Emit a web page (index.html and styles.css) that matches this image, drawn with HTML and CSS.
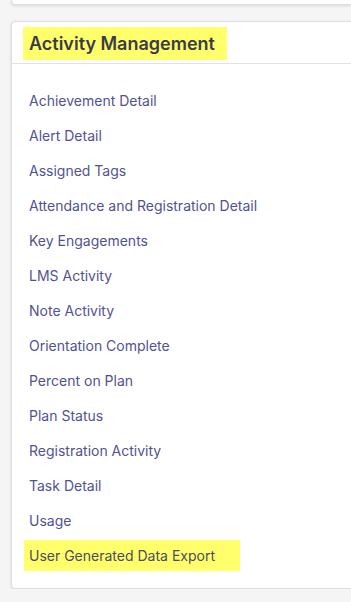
FILE: index.html
```html
<!DOCTYPE html>
<html lang="en">
<head>
<meta charset="utf-8">
<title>Activity Management</title>
<link rel="stylesheet" href="styles.css">
</head>
<body>
<div class="page">
  <div class="card card-prev"></div>
  <section class="card">
    <header class="card-header">
      <h2 class="card-title mark mark-title">Activity Management</h2>
    </header>
    <ul class="report-list">
      <li><a class="report" href="#">Achievement Detail</a></li>
      <li><a class="report" href="#">Alert Detail</a></li>
      <li><a class="report" href="#">Assigned Tags</a></li>
      <li><a class="report" href="#">Attendance and Registration Detail</a></li>
      <li><a class="report" href="#">Key Engagements</a></li>
      <li><a class="report" href="#">LMS Activity</a></li>
      <li><a class="report" href="#">Note Activity</a></li>
      <li><a class="report" href="#">Orientation Complete</a></li>
      <li><a class="report" href="#">Percent on Plan</a></li>
      <li><a class="report" href="#">Plan Status</a></li>
      <li><a class="report" href="#">Registration Activity</a></li>
      <li><a class="report" href="#">Task Detail</a></li>
      <li><a class="report" href="#">Usage</a></li>
      <li><a class="report mark mark-item" href="#">User Generated Data Export</a></li>
    </ul>
  </section>
</div>
</body>
</html>
```

FILE: styles.css
```css
html, body {
  margin: 0;
  padding: 0;
}
body {
  background: #f5f5f5;
  font-family: Inter, "Noto Sans", "Liberation Sans", sans-serif;
  overflow: hidden;
}
.page {
  padding-left: 11px;
  display: flex;
  flex-direction: column;
  gap: 16px;
}
.card {
  background: #ffffff;
  border: 1px solid #dedede;
  border-right: none;
  border-radius: 4px 0 0 4px;
  box-shadow: 0 1px 3px rgba(0, 0, 0, 0.12);
  box-sizing: border-box;
}
.card-prev {
  height: 5px;
  border-top: none;
  border-top-left-radius: 0;
}
.card-header {
  padding: 5px 11px 3px;
  border-bottom: 1px solid #e2e2e2;
}
.card-title {
  margin: 0;
  font-size: 18px;
  font-weight: 600;
  color: #3b3b47;
  height: 33px;
  line-height: 33px;
}
.mark {
  display: inline-block;
  background: #ffff6b;
}
.mark-title {
  padding: 0 12px 0 6px;
}
.report-list {
  list-style: none;
  margin: 0;
  padding: 21px 12px 17px;
  display: flex;
  flex-direction: column;
  gap: 4px;
}
.report {
  display: inline-block;
  height: 31px;
  line-height: 31px;
  padding: 0 5px;
  font-size: 14px;
  color: #525293;
  text-decoration: none;
}
.mark-item {
  color: #4c4c62;
  padding: 0 25px 0 5px;
}
```
